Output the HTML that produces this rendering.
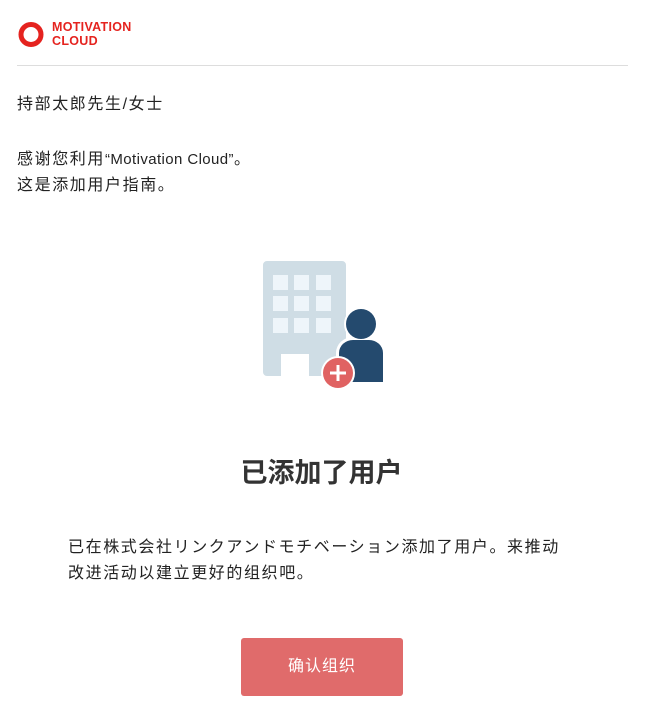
<!DOCTYPE html>
<html><head><meta charset="utf-8"><style>
body{margin:0;background:#fff;width:657px;height:717px;overflow:hidden;font-family:"Liberation Sans","Noto Sans CJK SC",sans-serif;color:#222;}
.t{position:absolute;font-size:16px;letter-spacing:1.6px;line-height:26px;white-space:nowrap;}
.l{letter-spacing:0.4px;font-size:15px;}
</style></head><body>
<svg style="position:absolute;left:17px;top:20px" width="30" height="30"><circle cx="14" cy="14.5" r="10" fill="none" stroke="#e5231f" stroke-width="5"/></svg>
<div style="position:absolute;left:52px;top:20px;font-size:12.5px;font-weight:bold;color:#e5231f;line-height:14px;letter-spacing:0.3px">MOTIVATION<br>CLOUD</div>
<div style="position:absolute;left:17px;top:65px;width:611px;height:1px;background:#ddd"></div>
<div class="t" style="left:17px;top:92px">持部太郎先生/女士</div>
<div class="t" style="left:17px;top:147px">感谢您利用<span class="l">“Motivation Cloud”</span>。<br>这是添加用户指南。</div>
<svg style="position:absolute;left:250px;top:250px" width="150" height="140">
<path d="M13 11h79a4 4 0 0 1 4 4v111h-37v-22h-28v22h-14a4 4 0 0 1-4-4v-107a4 4 0 0 1 4-4z" fill="#cfdde5"/>
<g fill="#eef5fa">
<rect x="23" y="25" width="15" height="15"/><rect x="44" y="25" width="15" height="15"/><rect x="66" y="25" width="15" height="15"/>
<rect x="23" y="46" width="15" height="15"/><rect x="44" y="46" width="15" height="15"/><rect x="66" y="46" width="15" height="15"/>
<rect x="23" y="68" width="15" height="15"/><rect x="44" y="68" width="15" height="15"/><rect x="66" y="68" width="15" height="15"/>
</g>
<circle cx="111" cy="74" r="17" fill="#fff"/>
<path d="M86 134v-31a17 16 0 0 1 17-16h16a17 16 0 0 1 17 16v31z" fill="#fff"/>
<circle cx="111" cy="74" r="15" fill="#244a6e"/>
<path d="M89 132v-29a14 13 0 0 1 14-13h16a14 13 0 0 1 14 13v29z" fill="#244a6e"/>
<circle cx="88" cy="123" r="17" fill="#fff"/>
<circle cx="88" cy="123" r="15" fill="#e06262"/>
<path d="M80 123h16M88 115v16" stroke="#fff" stroke-width="3"/>
</svg>
<div style="position:absolute;left:0;width:643px;top:451px;text-align:center;font-size:27px;font-weight:bold;color:#333">已添加了用户</div>
<div class="t" style="left:68px;top:535px">已在株式会社リンクアンドモチベーション添加了用户。来推动<br>改进活动以建立更好的组织吧。</div>
<div style="position:absolute;left:241px;top:638px;width:162px;height:58px;background:#e06b6b;border-radius:3px;color:#fff;font-size:16px;line-height:58px;text-align:center;letter-spacing:1px">确认组织</div>
</body></html>
